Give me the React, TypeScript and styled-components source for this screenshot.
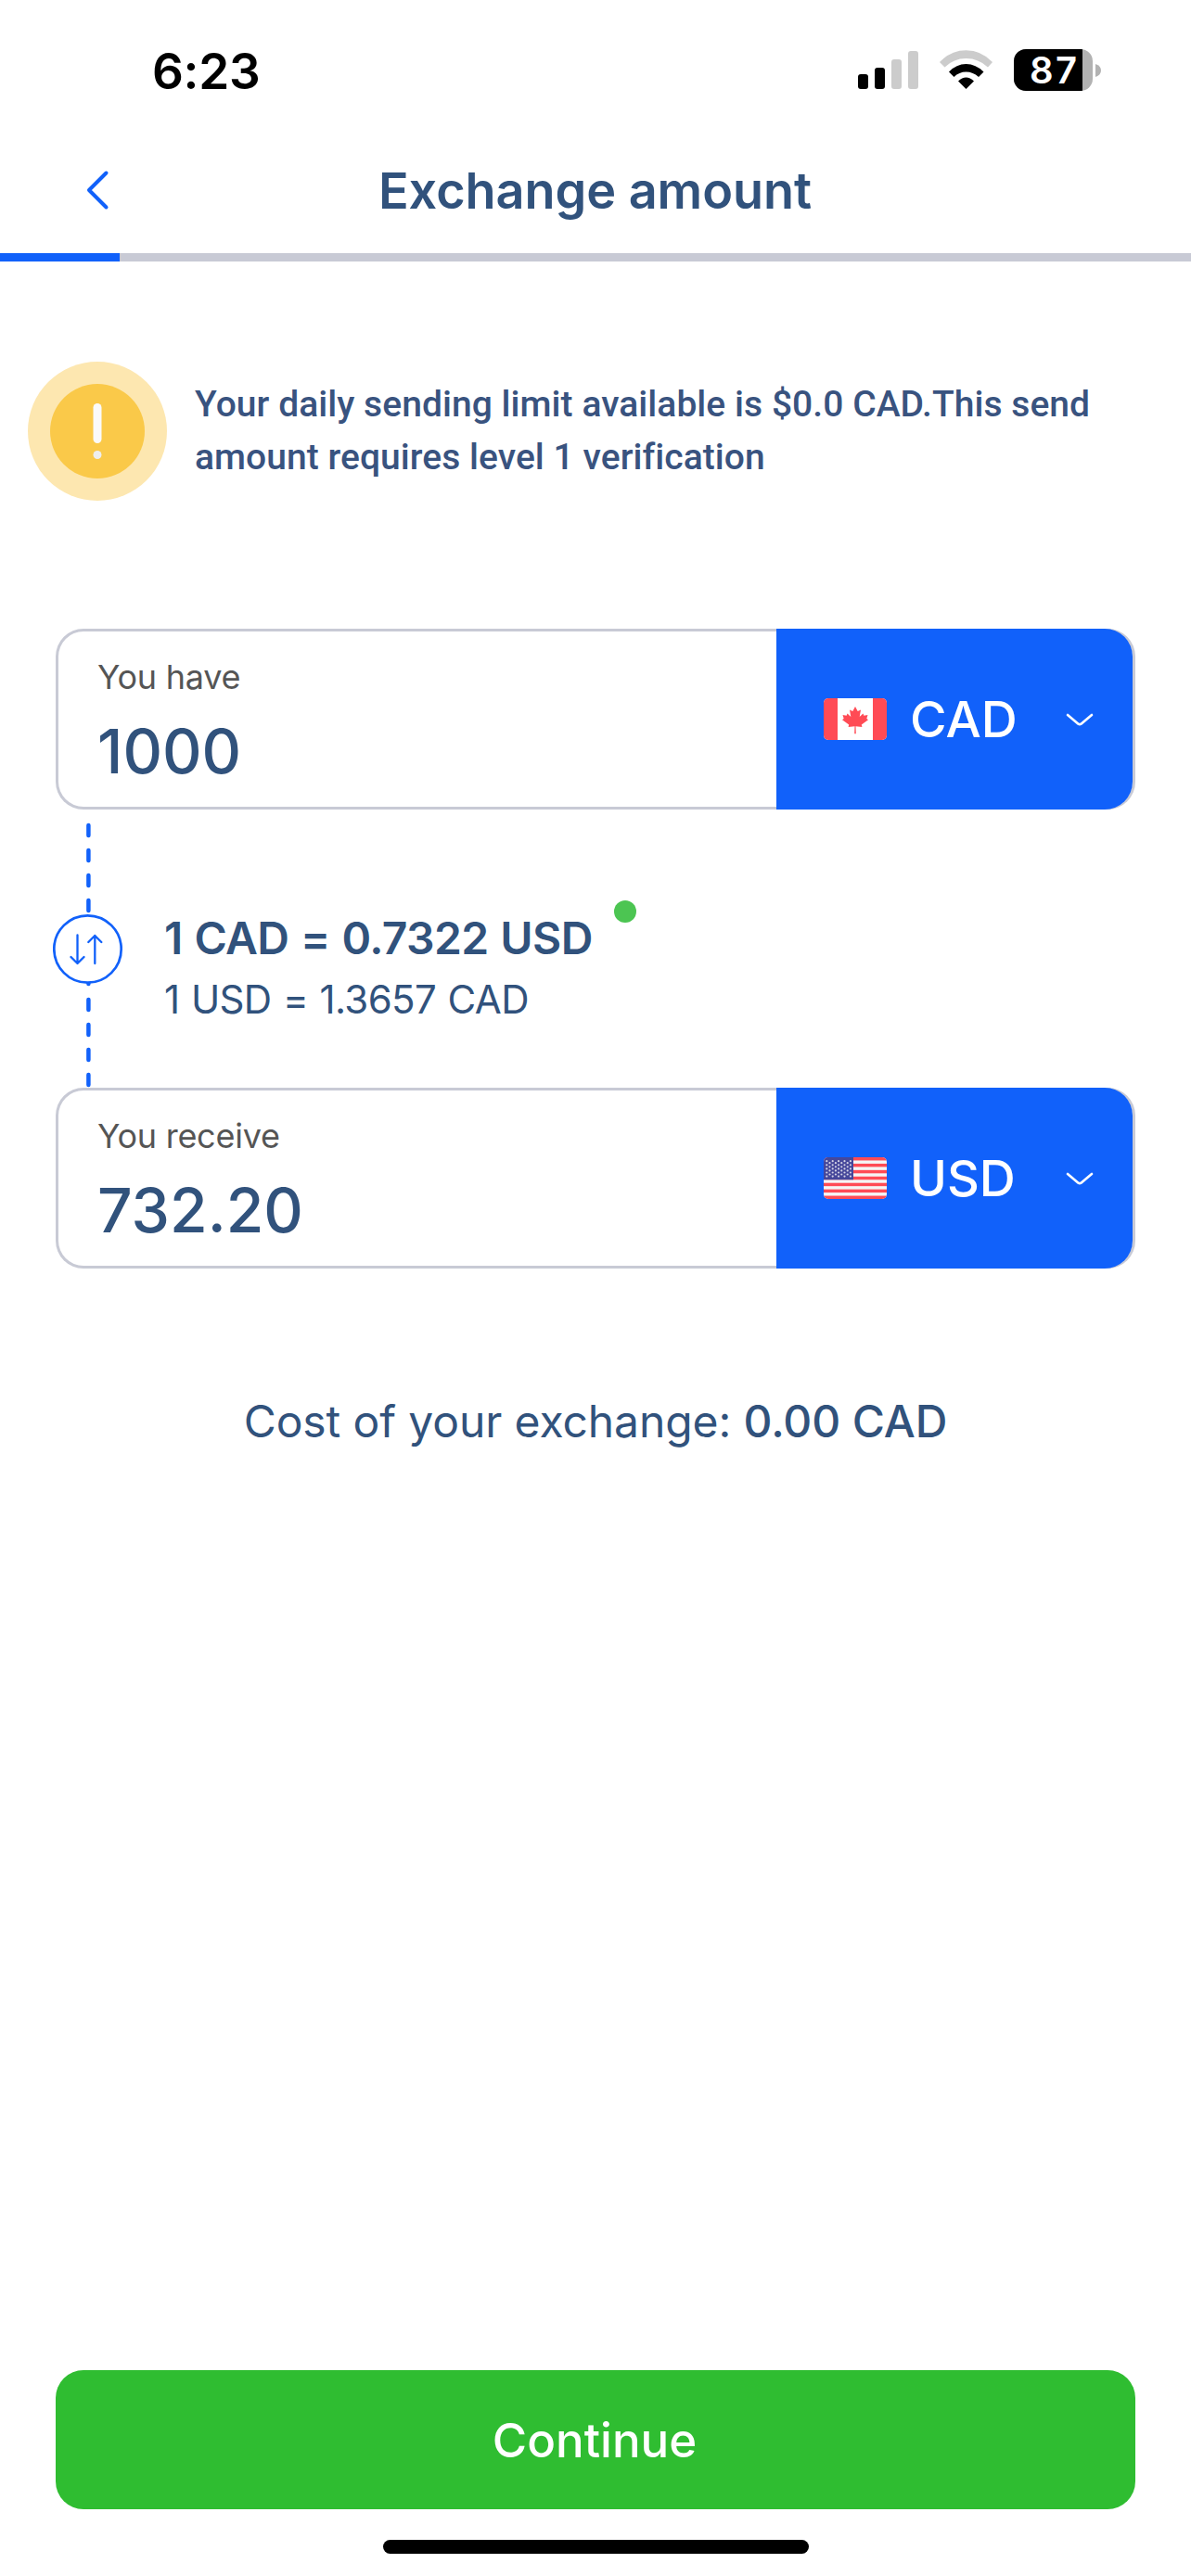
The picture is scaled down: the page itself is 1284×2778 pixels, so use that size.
import React from "react";
import styled, { createGlobalStyle } from "styled-components";

const blue = "#1161FA";
const navy = "#31527C";
const line = "#C8CAD5";

const Global = createGlobalStyle`
  * { box-sizing: border-box; }
  body { margin: 0; background: #fff; }
`;

const Screen = styled.div`
  width: 1284px;
  height: 2778px;
  display: flex;
  flex-direction: column;
  background: #fff;
  color: ${navy};
  font-family: Inter, "Liberation Sans", sans-serif;
  overflow: hidden;
`;

const StatusBar = styled.div`
  height: 141px;
  display: flex;
  justify-content: space-between;
  padding: 45px 96px 0 164px;
`;

const Time = styled.div`
  font-size: 53px;
  line-height: 64px;
  font-weight: 600;
  letter-spacing: -0.3px;
  color: #000;
`;

const StatusIcons = styled.svg`
  width: 264px;
  height: 48px;
  margin-top: 6px;
`;

const Header = styled.header`
  height: 132px;
  display: grid;
  grid-template-columns: 210px 1fr 210px;
  align-items: center;
`;

const BackButton = styled.button`
  border: 0;
  background: none;
  padding: 0 0 4px 90px;
  display: flex;
`;

const Title = styled.h1`
  margin: -2px 1px 0 0;
  text-align: center;
  font-size: 54px;
  line-height: 66px;
  font-weight: 600;
  letter-spacing: -0.05px;
`;

const Track = styled.div`
  height: 9px;
  background: ${line};
`;

const Progress = styled.div`
  width: 129px;
  height: 9px;
  background: ${blue};
`;

const Notice = styled.section`
  margin-top: 108px;
  height: 150px;
  padding-left: 30px;
  display: flex;
  align-items: center;
  gap: 30px;
`;

const NoticeText = styled.p`
  margin: 0;
  width: 1000px;
  font-family: Roboto, "Liberation Sans", sans-serif;
  font-size: 39px;
  line-height: 57px;
  font-weight: 500;
  letter-spacing: 0.05px;
  color: #39537f;
`;

const Form = styled.main`
  margin: 138px 60px 0;
  display: flex;
  flex-direction: column;
`;

const AmountBox = styled.div`
  height: 195px;
  display: flex;
  justify-content: space-between;
  border-radius: 30px;
  box-shadow: inset 0 0 0 3px ${line};
  padding-right: 3px;
`;

const Amount = styled.label`
  padding: 34px 0 0 45px;
  display: flex;
  flex-direction: column;
`;

const Caption = styled.span`
  font-size: 36px;
  line-height: 36px;
  font-weight: 400;
  letter-spacing: -0.25px;
  color: #555;
`;

const Value = styled.span`
  margin-top: 22px;
  font-size: 66px;
  line-height: 80px;
  font-weight: 500;
`;

const Currency = styled.button`
  width: 384px;
  border: 0;
  border-radius: 0 30px 30px 0;
  background: ${blue};
  color: #fff;
  padding: 0 41px 0 51px;
  display: flex;
  align-items: center;
  font-family: inherit;
`;

const Code = styled.span`
  flex: 1;
  padding-left: 25px;
  text-align: left;
  font-size: 54px;
  line-height: 66px;
  font-weight: 500;
`;

const RateRow = styled.div`
  height: 300px;
  display: flex;
  margin-left: -3px;
`;

const Rates = styled.div`
  padding: 110px 0 0 43px;
  display: flex;
  flex-direction: column;
`;

const RateLine = styled.div`
  display: flex;
`;

const MainRate = styled.span`
  font-size: 48px;
  line-height: 58px;
  font-weight: 600;
  letter-spacing: -0.6px;
  word-spacing: 1.2px;
`;

const InverseRate = styled.span`
  margin-top: 11px;
  font-size: 42px;
  line-height: 52px;
  font-weight: 400;
  letter-spacing: -0.64px;
  word-spacing: 1.3px;
`;

const LiveDot = styled.i`
  width: 24px;
  height: 24px;
  margin: -12px 0 0 23px;
  border-radius: 50%;
  background: #4cc552;
`;

const Cost = styled.p`
  margin: 136px 0 0;
  text-align: center;
  font-size: 48px;
  line-height: 58px;
  font-weight: 400;
  letter-spacing: -0.1px;
`;

const Strong = styled.strong`
  font-weight: 500;
  letter-spacing: -0.1px;
`;

const Footer = styled.footer`
  margin-top: auto;
  padding: 0 60px 24px;
  display: flex;
  flex-direction: column;
  align-items: center;
`;

const Continue = styled.button`
  width: 100%;
  height: 150px;
  border: 0;
  border-radius: 30px;
  background: #2fbd31;
  color: #fff;
  padding: 0 8px 0 6px;
  font-family: inherit;
  font-size: 51px;
  font-weight: 500;
`;

const HomeBar = styled.div`
  width: 459px;
  height: 15px;
  margin-top: 33px;
  border-radius: 8px;
  background: #000;
`;

const BatteryText = styled.text`
  font-family: Inter, sans-serif;
  font-size: 40px;
  font-weight: 600;
  fill: #fff;
`;

function Status() {
  return (
    <StatusIcons viewBox="924 51 264 48">
      <rect x="925" y="80" width="11" height="16" rx="3" />
      <rect x="943" y="73" width="11" height="23" rx="3" />
      <rect x="961" y="64" width="11" height="32" rx="3" fill="#ccc" />
      <rect x="979" y="55" width="11" height="41" rx="3" fill="#ccc" />
      <path d="M1013 67Q1025 54.300 1041.500 54.300T1070 67L1065 72.500Q1055 63 1041.500 63T1018.500 72.500Z" fill="#ccc" />
      <path d="M1023 77.500Q1031 69 1041.500 69T1060.500 77.500L1055 83Q1049 77.500 1041.500 77.500T1028.500 83Z" />
      <path d="M1033 87.500Q1041.500 79.500 1050 87.500L1041.500 96Z" />
      <clipPath id="charge"><rect x="1093" y="53" width="85" height="45" rx="13" /></clipPath>
      <g clipPath="url(#charge)">
        <rect x="1093" y="53" width="85" height="45" fill="#b2b2b2" />
        <rect x="1093" y="53" width="74" height="45" />
      </g>
      <path d="M1181 69Q1187 71 1187 76T1181 83Z" fill="#b2b2b2" />
      <BatteryText x="1110" y="90" textLength="51">87</BatteryText>
    </StatusIcons>
  );
}

function Warning() {
  return (
    <svg width="150" height="150" viewBox="0 0 150 150">
      <circle cx="75" cy="75" r="75" fill="#FDE7B0" />
      <circle cx="75" cy="75" r="51" fill="#FAC949" />
      <rect x="70.500" y="45" width="9" height="43" rx="4.500" fill="#fafafa" />
      <circle cx="75" cy="100.500" r="4.500" fill="#eee" />
    </svg>
  );
}

function CanadaFlag() {
  return (
    <svg width="68" height="45" viewBox="0 0 68 45">
      <clipPath id="ca"><rect width="68" height="45" rx="5" /></clipPath>
      <g clipPath="url(#ca)">
        <rect width="68" height="45" fill="#fff" />
        <path d="M0 0h15v45H0zM53 0h15v45H53z" fill="#FF4B55" />
        <path d="M34 9l2.700 5 3.300-1.500-1.300 7.500 3.800-3.500.9 2.200 4.100-.6-1.200 4 1.700 1.200-7.200 5.200.6 2.600-6.900-.9.300 8h-1.600l.3-8-6.900.9.600-2.600-7.200-5.200 1.700-1.200-1.200-4 4.100.6.900-2.200 3.800 3.500-1.300-7.500 3.300 1.500z" fill="#FF4B55" />
      </g>
    </svg>
  );
}

function UsaFlag() {
  const stars = [];
  for (let col = 0; col < 9; col++) {
    const count = col % 2 ? 4 : 5;
    for (let row = 0; row < count; row++) {
      stars.push(
        <circle key={`${col}-${row}`} cx={3.3 + col * 3.2} cy={(col % 2 ? 6.200 : 4.200) + row * 4.100} r="1.100" />
      );
    }
  }
  return (
    <svg width="68" height="45" viewBox="0 0 68 45">
      <clipPath id="us"><rect width="68" height="45" rx="5" /></clipPath>
      <g clipPath="url(#us)">
        <rect width="68" height="45" fill="#F5F5F5" />
        {[0, 1, 2, 3, 4, 5, 6].map((i) => (
          <rect key={i} y={(i * 90) / 13} width="68" height={45 / 13} fill="#FF4B55" />
        ))}
        <rect width="32" height="24.230" fill="#46479A" />
        <g fill="#d2d2e4">{stars}</g>
      </g>
    </svg>
  );
}

function Chevron() {
  return (
    <svg width="32" height="18" viewBox="0 0 32 18" fill="none" stroke="#fff" strokeWidth="2.600" strokeLinecap="round" strokeLinejoin="round">
      <path d="M3 4l11.500 9.700q1.500 1 3 0L29 4" />
    </svg>
  );
}

function SwapLine() {
  return (
    <svg width="77" height="300" viewBox="57 873 77 300" fill="none" stroke={blue} strokeLinecap="round">
      <path d="M95.400 890v11m0 16v11m0 16v11m0 16v11M95.400 1050v11m0 17v11m0 16v11m0 16v11m0 16v11" strokeWidth="4.500" />
      <circle cx="94.500" cy="1023.500" r="36.200" fill="#fff" strokeWidth="2.700" />
      <path d="M83.500 1008.500v30.500m-7-7l7 7 7-7M102.300 1039v-30m-7 7l7-7 7 7" strokeWidth="2.300" strokeLinejoin="round" />
    </svg>
  );
}

type FieldProps = { label: string; value: string; code: string; flag: React.ReactNode };

function Field({ label, value, code, flag }: FieldProps) {
  return (
    <AmountBox>
      <Amount>
        <Caption>{label}</Caption>
        <Value>{value}</Value>
      </Amount>
      <Currency>
        {flag}
        <Code>{code}</Code>
        <Chevron />
      </Currency>
    </AmountBox>
  );
}

export default function App() {
  return (
    <Screen>
      <Global />
      <StatusBar>
        <Time>6:23</Time>
        <Status />
      </StatusBar>
      <Header>
        <BackButton aria-label="Back">
          <svg width="30" height="46" viewBox="0 0 30 46" fill="none" stroke={blue} strokeWidth="4" strokeLinecap="round" strokeLinejoin="round">
            <path d="M24.500 4.500L6 23l18.500 18.500" />
          </svg>
        </BackButton>
        <Title>Exchange amount</Title>
      </Header>
      <Track>
        <Progress />
      </Track>
      <Notice>
        <Warning />
        <NoticeText>
          Your daily sending limit available is $0.0 CAD.This send amount requires level 1 verification
        </NoticeText>
      </Notice>
      <Form>
        <Field label="You have" value="1000" code="CAD" flag={<CanadaFlag />} />
        <RateRow>
          <SwapLine />
          <Rates>
            <RateLine>
              <MainRate>1 CAD = 0.7322 USD</MainRate>
              <LiveDot />
            </RateLine>
            <InverseRate>1 USD = 1.3657 CAD</InverseRate>
          </Rates>
        </RateRow>
        <Field label="You receive" value="732.20" code="USD" flag={<UsaFlag />} />
        <Cost>
          Cost of your exchange: <Strong>0.00 CAD</Strong>
        </Cost>
      </Form>
      <Footer>
        <Continue>Continue</Continue>
        <HomeBar />
      </Footer>
    </Screen>
  );
}
